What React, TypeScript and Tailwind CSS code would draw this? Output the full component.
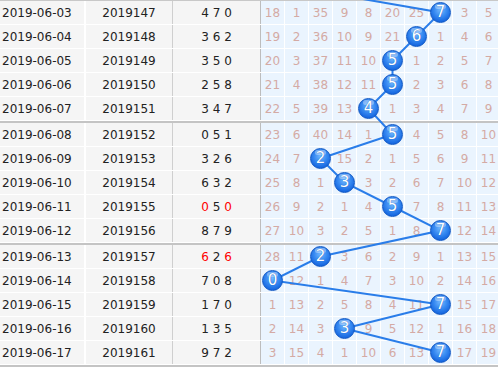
import React from "react";

type Row = {
  date: string;
  issue: string;
  nums: string;
  ball: number;
  cells: (number | null)[];
};

const raw: [string, string, string, number, string][] = [
  ["2019-06-03", "2019147", "470", 7, "18 1 35 9 8 20 25 _ 3 5"],
  ["2019-06-04", "2019148", "362", 6, "19 2 36 10 9 21 _ 1 4 6"],
  ["2019-06-05", "2019149", "350", 5, "20 3 37 11 10 _ 1 2 5 7"],
  ["2019-06-06", "2019150", "258", 5, "21 4 38 12 11 _ 2 3 6 8"],
  ["2019-06-07", "2019151", "347", 4, "22 5 39 13 _ 1 3 4 7 9"],
  ["2019-06-08", "2019152", "051", 5, "23 6 40 14 1 _ 4 5 8 10"],
  ["2019-06-09", "2019153", "326", 2, "24 7 _ 15 2 1 5 6 9 11"],
  ["2019-06-10", "2019154", "632", 3, "25 8 1 _ 3 2 6 7 10 12"],
  ["2019-06-11", "2019155", "050", 5, "26 9 2 1 4 _ 7 8 11 13"],
  ["2019-06-12", "2019156", "879", 7, "27 10 3 2 5 1 8 _ 12 14"],
  ["2019-06-13", "2019157", "626", 2, "28 11 _ 3 6 2 9 1 13 15"],
  ["2019-06-14", "2019158", "708", 0, "_ 12 1 4 7 3 10 2 14 16"],
  ["2019-06-15", "2019159", "170", 7, "1 13 2 5 8 4 11 _ 15 17"],
  ["2019-06-16", "2019160", "135", 3, "2 14 3 _ 9 5 12 1 16 18"],
  ["2019-06-17", "2019161", "972", 7, "3 15 4 1 10 6 13 _ 17 19"],
];

const rows: Row[] = raw.map(([date, issue, nums, ball, c]) => ({
  date,
  issue,
  nums,
  ball,
  cells: c.split(" ").map((v) => (v === "_" ? null : Number(v))),
}));

const groups = [rows.slice(0, 5), rows.slice(5, 10), rows.slice(10, 15)];

// ball centre, matches the flow layout below
const cx = (col: number) => 272.5 + col * 24;
const cy = (i: number) => 1 + Math.floor(i / 5) * 122 + (i % 5) * 24 + 11.5;

function Nums({ nums }: { nums: string }) {
  const digits = nums.split("");
  return (
    <span>
      {digits.map((d, i) => {
        const repeated = digits.filter((x) => x === d).length > 1;
        return (
          <span key={i} className={repeated ? "text-[#ff0000]" : "text-[#222]"}>
            {d}
            {i < digits.length - 1 ? " " : ""}
          </span>
        );
      })}
    </span>
  );
}

function Ball({ n }: { n: number }) {
  return (
    <div className="relative z-20 w-[21px] h-[21px] shrink-0 rounded-full border border-[#1158c4] bg-[radial-gradient(circle_at_50%_38%,#74baff_0%,#3a8cf2_40%,#1667e0_75%,#0c52bf_100%)] flex items-center justify-center">
      <div className="absolute top-[1px] left-[4px] w-[11px] h-[5px] rounded-full bg-white/35" />
      <span className="relative text-white text-[15px] leading-none [text-shadow:0_0_1px_#0b4fb5]">{n}</span>
    </div>
  );
}

export default function App() {
  const points = rows.map((r, i) => `${cx(r.ball)},${cy(i)}`);
  const line = [`${cx(1)},-12.5`, ...points].join(" ");

  return (
    <div
      className="relative w-[498px] h-[368px] overflow-hidden bg-white text-[12px]"
      style={{ fontFamily: '"DejaVu Sans", Verdana, sans-serif' }}
    >
      <div className="w-[560px] border-t border-[#c8c8c8]">
        {groups.map((g, gi) => (
          <div key={gi} className="border-b-2 border-[#c4c4c4]">
            {g.map((r) => (
              <div key={r.issue} className="flex h-[24px] border-b border-white">
                <div className="w-[86px] shrink-0 bg-[#f5f5f5] pl-[2px] flex items-center text-[#222] border-r-2 border-white">
                  {r.date}
                </div>
                <div className="w-[87px] shrink-0 bg-[#f5f5f5] flex items-center justify-center text-[#222] border-r border-[#cfcfcf]">
                  {r.issue}
                </div>
                <div className="w-[88px] shrink-0 bg-[#f5f5f5] flex items-center justify-center border-r border-[#bdbdbd]">
                  <Nums nums={r.nums} />
                </div>
                <div className="flex">
                  {r.cells.map((v, ci) => (
                    <div
                      key={ci}
                      className="w-[24px] shrink-0 bg-[#eaf4fe] border-r border-white flex items-center justify-center text-[#d4aaa4]"
                    >
                      {v === null ? <Ball n={ci} /> : v}
                    </div>
                  ))}
                </div>
              </div>
            ))}
          </div>
        ))}
      </div>

      <svg className="absolute inset-0 z-10 pointer-events-none" width={498} height={368}>
        <polyline points={line} fill="none" stroke="#2a7de9" strokeWidth={2} />
      </svg>
    </div>
  );
}
